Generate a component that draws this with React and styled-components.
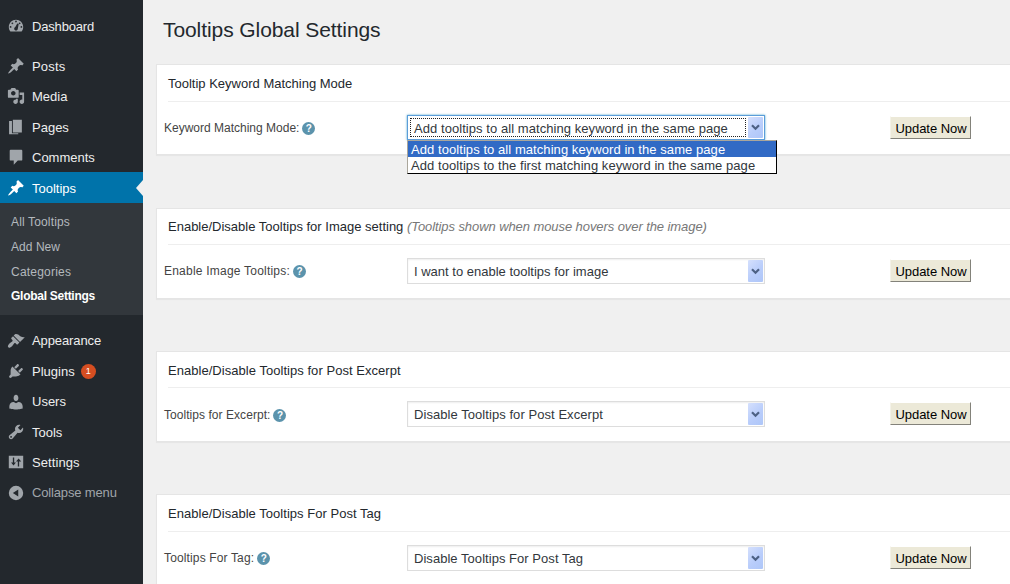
import React from "react";
import styled, { createGlobalStyle, css } from "styled-components";

const Global = createGlobalStyle`
  html, body { margin: 0; padding: 0; height: 584px; overflow: hidden; }
  body { background: #f0f0f0; font-family: "Liberation Sans", Arial, sans-serif; font-size: 13px; color: #32373c; }
  *, *::before, *::after { box-sizing: border-box; }
`;

const Page = styled.div`
  display: flex;
  width: 1010px;
  height: 584px;
  overflow: hidden;
`;

const Sidebar = styled.nav`
  flex: 0 0 143px;
  padding-top: 11px;
  background: #23282d;
`;

const MenuItem = styled.div`
  position: relative;
  display: flex;
  align-items: center;
  height: ${(p) => p.$h}px;
  margin-top: ${(p) => p.$gap || 0}px;
  padding-left: 7px;
  gap: 7px;
  color: ${(p) => (p.$current ? "#fff" : p.$muted ? "#a0a5aa" : "#eee")};
  background: ${(p) => (p.$current ? "#0073aa" : "transparent")};
  white-space: nowrap;
  svg { flex: none; fill: ${(p) => (p.$current ? "#fff" : "#a0a5aa")}; }
  ${(p) =>
    p.$current &&
    css`
      &::after {
        content: "";
        position: absolute;
        right: 0;
        top: 8px;
        border: 8px solid transparent;
        border-left: 0;
        border-right: 7px solid #f0f0f0;
      }
    `}
`;

const Label = styled.span`
  padding-top: ${(p) => p.$drop || 0}px;
  letter-spacing: ${(p) => p.$ls || 0}px;
  line-height: 18px;
`;

const Badge = styled.span`
  width: 15px;
  height: 15px;
  margin-left: -1px;
  border-radius: 50%;
  background: #d54e21;
  color: #fff;
  font-size: 9px;
  line-height: 15px;
  text-align: center;
`;

const SubMenu = styled.div`
  height: 112px;
  padding: 7px 0 0 11px;
  background: #32373c;
`;

const SubItem = styled.div`
  height: 25px;
  line-height: ${(p) => (p.$current ? 23 : 25)}px;
  font-size: 12px;
  letter-spacing: ${(p) => p.$ls}px;
  color: ${(p) => (p.$current ? "#fff" : "#b4b9be")};
  font-weight: ${(p) => (p.$current ? 700 : 400)};
`;

const Main = styled.main`
  flex: 1;
  min-width: 0;
  padding-left: 13px;
`;

const Title = styled.h1`
  margin: 0;
  height: 64px;
  padding: 15px 0 0 7px;
  font-size: 21px;
  font-weight: 400;
  line-height: 30px;
  letter-spacing: -0.08px;
  color: #23282d;
`;

const Card = styled.section`
  height: 91px;
  margin-bottom: ${(p) => p.$gap}px;
  border: 1px solid #e5e5e5;
  border-right: 0;
  background: #fff;
  box-shadow: 0 1px 1px rgba(0, 0, 0, 0.04);
`;

const CardTitle = styled.h3`
  height: ${(p) => p.$h}px;
  margin: 0 0 0 11px;
  border-bottom: 1px solid #eee;
  font-size: 13px;
  font-weight: 400;
  line-height: ${(p) => p.$lh}px;
  color: #23282d;
  white-space: nowrap;
  letter-spacing: ${(p) => p.$ls}px;
`;

const Hint = styled.em`
  color: #777;
  letter-spacing: ${(p) => p.$ls}px;
`;

const Row = styled.div`
  display: flex;
  align-items: flex-start;
  padding: 13px 0 0 7px;
`;

const FieldLabel = styled.div`
  display: flex;
  align-items: center;
  flex: 0 0 243px;
  height: 26px;
  padding-top: ${(p) => p.$drop || 0}px;
  gap: 3px;
  font-size: 12px;
  color: #444;
  white-space: nowrap;
`;

const HelpDot = styled.span`
  width: 13px;
  height: 13px;
  margin-top: 1px;
  border-radius: 50%;
  background: #5b93ac;
  color: #fff;
  font-size: 10px;
  font-weight: 700;
  line-height: 13px;
  text-align: center;
`;

const SelectBox = styled.div`
  position: relative;
  display: flex;
  flex: 0 0 358px;
  height: ${(p) => (p.$open ? 25 : 26)}px;
  padding: 1px;
  border: 1px solid ${(p) => (p.$open ? "#5b9dd9" : "#ddd")};
  background: #fff;
  box-shadow: ${(p) => (p.$open ? "0 0 2px rgba(30,140,190,.8)" : "inset 0 1px 2px rgba(0,0,0,.07)")};
`;

const SelectText = styled.div`
  flex: 1;
  margin: 1px;
  padding-left: 3px;
  border: 1px dotted ${(p) => (p.$open ? "#222" : "transparent")};
  line-height: 19px;
  color: #32373c;
  white-space: nowrap;
  letter-spacing: ${(p) => p.$ls}px;
`;

const Arrow = styled.div`
  display: flex;
  align-items: center;
  justify-content: center;
  width: 15px;
  margin-left: 1px;
  border-radius: 1px;
  background: linear-gradient(135deg, #d5e0fd, #b9cdfb 55%, #aec6f8);
`;

const Menu = styled.div`
  position: absolute;
  z-index: 2;
  left: -1px;
  top: 24px;
  width: 370px;
  height: 34px;
  border: 1px solid #000;
  border-top-color: #aaa69b;
  border-left-color: #aaa69b;
  background: #fff;
`;

const Option = styled.div`
  height: 16px;
  padding-left: 3px;
  line-height: 18px;
  white-space: nowrap;
  letter-spacing: 0.065px;
  color: ${(p) => (p.$active ? "#fff" : "#32373c")};
  background: ${(p) => (p.$active ? "#316ac5" : "transparent")};
`;

const Button = styled.button`
  width: 81px;
  height: 23px;
  margin: 1px 0 0 125px;
  padding: 2px 0 0 1px;
  border: 1px solid;
  border-color: #fff #83827a #83827a #f4f2e8;
  background: #ece9d8;
  color: #000;
  font: 13px/19px "Liberation Sans", Arial, sans-serif;
  letter-spacing: -0.05px;
  white-space: nowrap;
`;

const ICONS = {
  dashboard:
    "M3.76 16h12.48c1.1-1.37 1.76-3.11 1.76-5 0-4.42-3.58-8-8-8s-8 3.58-8 8c0 1.89.66 3.63 1.76 5zM10 4c.55 0 1 .45 1 1s-.45 1-1 1-1-.45-1-1 .45-1 1-1zM6 6c.55 0 1 .45 1 1s-.45 1-1 1-1-.45-1-1 .45-1 1-1zm8 0c.55 0 1 .45 1 1s-.45 1-1 1-1-.45-1-1 .45-1 1-1zm-2.600 1.200l1.600 .6L12 13c0 1.1-.9 2-2 2s-2-.9-2-2c0-.8.5-1.500 1.200-1.800zM4 10c.55 0 1 .45 1 1s-.45 1-1 1-1-.45-1-1 .45-1 1-1zm12 0c.55 0 1 .45 1 1s-.45 1-1 1-1-.45-1-1 .45-1 1-1z",
  pin: "M10.44 3.02l1.82-1.82 6.36 6.35-1.83 1.82c-1.05-.68-2.48-.57-3.41.36l-.75.75c-.92.93-1.04 2.35-.35 3.41l-1.83 1.82-2.41-2.41-2.8 2.79c-.42.42-3.38 2.71-3.8 2.29s1.86-3.39 2.28-3.81l2.79-2.79L4.1 9.36l1.83-1.82c1.05.69 2.48.57 3.4-.36l.75-.75c.93-.92 1.05-2.35.36-3.41z",
  media:
    "M13 11V4c0-.55-.45-1-1-1h-1.67L9 1H5L3.67 3H2c-.55 0-1 .45-1 1v7c0 .55.45 1 1 1h10c.55 0 1-.45 1-1zM7 4.5c1.38 0 2.5 1.12 2.5 2.5S8.38 9.5 7 9.5 4.5 8.38 4.5 7 5.62 4.5 7 4.5zM14 6h5v10.5c0 1.38-1.12 2.5-2.5 2.5S14 17.88 14 16.5s1.12-2.5 2.5-2.5c.17 0 .34.02.5.05V9h-3V6zm-4 8.05V13h2v3.5c0 1.38-1.12 2.5-2.5 2.5S7 17.88 7 16.5 8.12 14 9.5 14c.17 0 .34.02.5.05z",
  page: "M6.500 2H16.500v14H6.500zM2.300 3.200H5.500V17H12.500V18H2.300z",
  comment: "M4 2h12c.6 0 1 .4 1 1v10c0 .6-.4 1-1 1h-4l-4.500 4.500V14H4c-.6 0-1-.4-1-1V3c0-.6.4-1 1-1z",
  brush:
    "M14.48 11.06L7.41 3.99l1.5-1.5c.5-.56 2.3-.47 3.51.32 1.21.8 1.43 1.28 2.91 2.1 1.18.64 2.45 1.26 4.45.85zm-.71.71L6.7 4.7 4.93 6.47c-.39.39-.39 1.02 0 1.41l1.06 1.06c.39.39.39 1.03 0 1.42-.6.6-1.43 1.11-2.21 1.69-.35.26-.7.53-1.01.84C1.43 14.23.4 16.08 1.4 17.07c.99 1 2.84-.03 4.18-1.36.31-.31.58-.66.85-1.02.57-.78 1.08-1.61 1.69-2.21.39-.39 1.02-.39 1.41 0l1.06 1.06c.39.39 1.02.39 1.41 0z",
  plug: "M13.11 4.36L9.87 7.6 8 5.73l3.24-3.24c.35-.34 1.05-.2 1.56.32.52.51.66 1.21.31 1.55zm-8 1.77l.91-1.12 9.01 9.01-1.19.84c-.71.71-2.63 1.16-3.82 1.16H6.14L4.9 17.26c-.59.59-1.54.59-2.12 0-.59-.58-.59-1.53 0-2.12l1.24-1.24v-3.88c0-1.13.4-3.19 1.09-3.89zm7.26 3.97l3.24-3.24c.34-.35 1.04-.21 1.55.31.52.51.66 1.21.31 1.55l-3.24 3.25z",
  user: "M10 8.800c-2.100 0-2.650-2-2.650-3.300C7.350 3.500 8.300 2 10 2s2.650 1.500 2.650 3.500c0 1.300-.55 3.300-2.650 3.300zM10 11.400L12.500 9.900c3.200 0 4.900 2.300 4.900 4.700v2.500s-3.700 1.130-7.400 1.130c-3.700 0-7.400-1.130-7.400-1.130v-2.500c0-2.400 1.700-4.700 4.900-4.700z",
  wrench:
    "M16.68 9.77c-1.34 1.34-3.3 1.67-4.95.99l-5.41 6.52c-.99.99-2.59.99-3.58 0s-.99-2.59 0-3.57l6.52-5.42c-.68-1.65-.35-3.61.99-4.95 1.28-1.28 3.12-1.62 4.72-1.06l-2.89 2.89 2.82 2.82 2.86-2.87c.53 1.58.18 3.39-1.08 4.65zM3.81 16.21c.4.39 1.04.39 1.43 0 .4-.4.4-1.04 0-1.43-.39-.4-1.03-.4-1.43 0-.39.39-.39 1.03 0 1.43z",
  sliders:
    "M2 3h16v14H2zM6.500 5v5.500H4.500L7.250 14 10 10.500H8V5zM12 15h1.500V9.500H15.800L12.900 6 10 9.500h2z",
  collapse: "M10 2a8 8 0 1 0 0 16 8 8 0 0 0 0-16zM12.500 6v8L6.500 10z",
};

const Icon = ({ name }) => (
  <svg width="18" height="18" viewBox="0 0 20 20" fillRule="evenodd">
    <path d={ICONS[name]} />
  </svg>
);

const TOP = [
  { t: "Dashboard", i: "dashboard", h: 30, ls: -0.17 },
  { t: "Posts", i: "pin", h: 30, gap: 10, ls: 0.2 },
  { t: "Media", i: "media", h: 30 },
  { t: "Pages", i: "page", h: 31, drop: 3 },
  { t: "Comments", i: "comment", h: 30 },
  { t: "Tooltips", i: "pin", h: 31, current: true, drop: 3 },
];
const SUB = [
  { t: "All Tooltips", ls: 0.15 },
  { t: "Add New", ls: 0.05 },
  { t: "Categories", ls: 0.22 },
  { t: "Global Settings", current: true, ls: -0.27 },
];
const BOTTOM = [
  { t: "Appearance", i: "brush", h: 31, gap: 10, ls: -0.1, drop: 1 },
  { t: "Plugins", i: "plug", h: 30, badge: "1" },
  { t: "Users", i: "user", h: 31, drop: 1 },
  { t: "Tools", i: "wrench", h: 30 },
  { t: "Settings", i: "sliders", h: 30, ls: 0.08 },
  { t: "Collapse menu", i: "collapse", h: 31, muted: true, ls: -0.15, drop: 1 },
];

const Entry = ({ e }) => (
  <MenuItem $h={e.h} $gap={e.gap} $current={e.current} $muted={e.muted}>
    <Icon name={e.i} />
    <Label $ls={e.ls} $drop={e.drop || 2}>{e.t}</Label>
    {e.badge && <Badge>{e.badge}</Badge>}
  </MenuItem>
);

const CARDS = [
  {
    title: "Tooltip Keyword Matching Mode",
    titleH: 37,
    titleLh: 38,
    label: "Keyword Matching Mode:",
    value: "Add tooltips to all matching keyword in the same page",
    valueLs: 0.06,
    options: [
      "Add tooltips to all matching keyword in the same page",
      "Add tooltips to the first matching keyword in the same page",
    ],
    gap: 53,
  },
  {
    title: "Enable/Disable Tooltips for Image setting",
    titleH: 36,
    titleLh: 36,
    hint: "(Tooltips shown when mouse hovers over the image)",
    hintLs: -0.08,
    label: "Enable Image Tooltips:",
    labelLs: 0.22,
    value: "I want to enable tooltips for image",
    gap: 52,
  },
  {
    title: "Enable/Disable Tooltips for Post Excerpt",
    titleH: 36,
    titleLh: 38,
    titleLs: 0.04,
    label: "Tooltips for Excerpt:",
    labelLs: 0.05,
    labelDrop: 2,
    value: "Disable Tooltips for Post Excerpt",
    valueLs: 0.06,
    gap: 52,
  },
  {
    title: "Enable/Disable Tooltips For Post Tag",
    titleH: 37,
    titleLh: 38,
    titleLs: 0.03,
    label: "Tooltips For Tag:",
    labelLs: 0.14,
    value: "Disable Tooltips For Post Tag",
    valueLs: 0.04,
    gap: 0,
  },
];

export default function App() {
  return (
    <Page>
      <Global />
      <Sidebar>
        {TOP.map((e) => <Entry key={e.t} e={e} />)}
        <SubMenu>
          {SUB.map((s) => <SubItem key={s.t} $current={s.current} $ls={s.ls}>{s.t}</SubItem>)}
        </SubMenu>
        {BOTTOM.map((e) => <Entry key={e.t} e={e} />)}
      </Sidebar>
      <Main>
        <Title>Tooltips Global Settings</Title>
        {CARDS.map((c) => (
          <Card key={c.title} $gap={c.gap}>
            <CardTitle $h={c.titleH} $lh={c.titleLh} $ls={c.titleLs || 0}>
              {c.title} {c.hint && <Hint $ls={c.hintLs}>{c.hint}</Hint>}
            </CardTitle>
            <Row>
              <FieldLabel $drop={c.labelDrop}>
                <Label $ls={c.labelLs}>{c.label}</Label>
                <HelpDot>?</HelpDot>
              </FieldLabel>
              <SelectBox $open={!!c.options}>
                <SelectText $open={!!c.options} $ls={c.valueLs || 0}>{c.value}</SelectText>
                <Arrow>
                  <svg width="9" height="7" viewBox="0 0 9 7">
                    <path d="M1 1.200L4.500 4.700L8 1.200" fill="none" stroke="#4d6185" strokeWidth="2.200" />
                  </svg>
                </Arrow>
                {c.options && (
                  <Menu>
                    {c.options.map((o, n) => (
                      <Option key={o} $active={n === 0}>{o}</Option>
                    ))}
                  </Menu>
                )}
              </SelectBox>
              <Button>Update Now</Button>
            </Row>
          </Card>
        ))}
      </Main>
    </Page>
  );
}
